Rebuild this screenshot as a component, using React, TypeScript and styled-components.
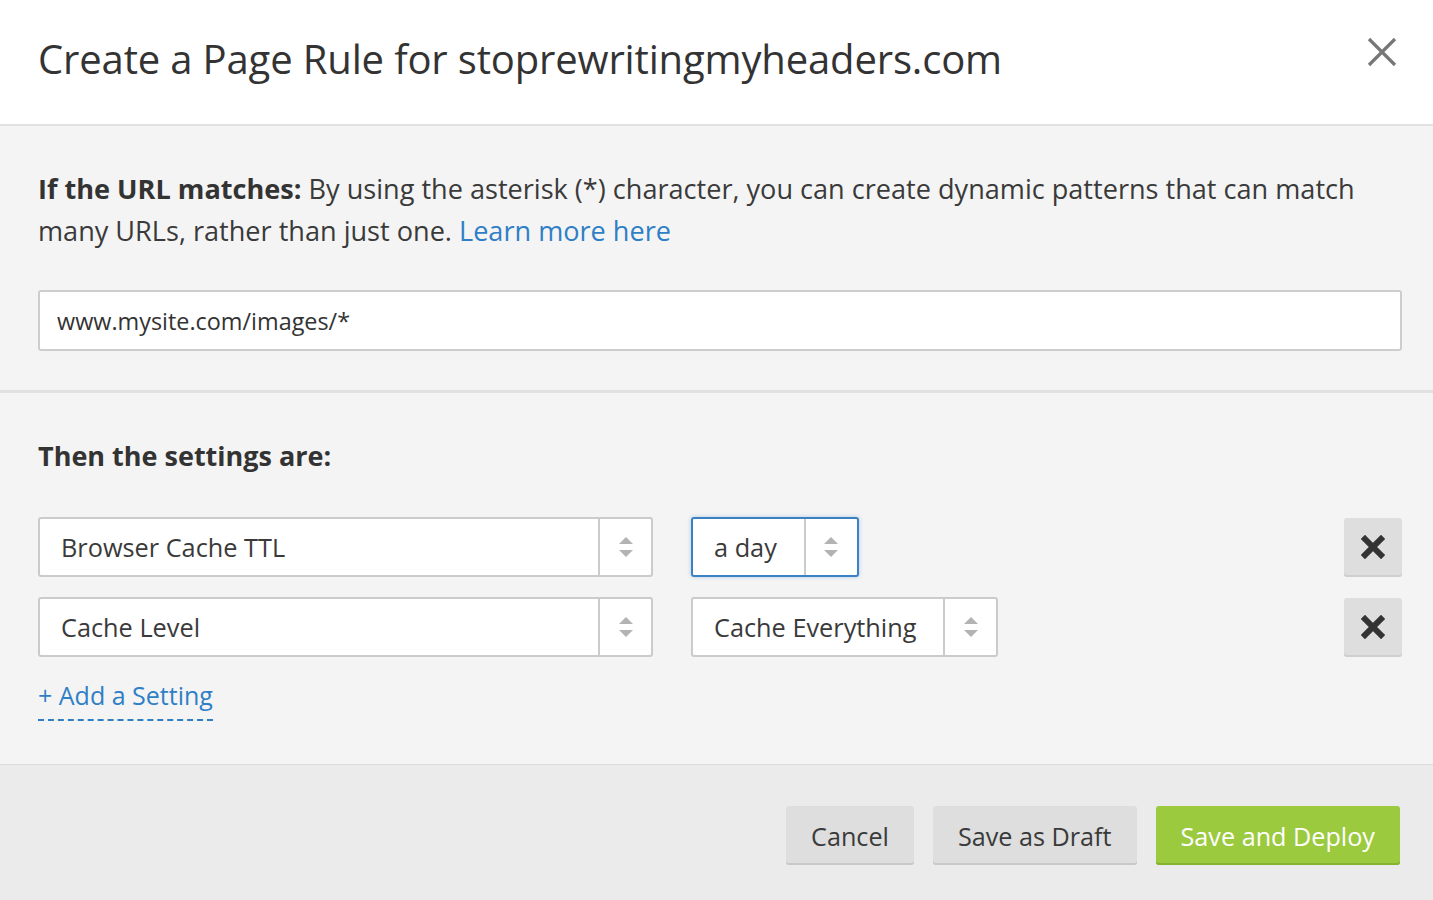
import styled, { createGlobalStyle } from "styled-components";

const GlobalStyle = createGlobalStyle`
  html, body { margin: 0; padding: 0; background: #fff; }
  body {
    font-family: "Open Sans", "Noto Sans", sans-serif;
    color: #333;
  }
  * { box-sizing: border-box; }
`;

const Modal = styled.div`
  width: 1433px;
  height: 900px;
  display: flex;
  flex-direction: column;
  background: #fff;
  overflow: hidden;
`;

const Header = styled.header`
  height: 126px;
  flex-shrink: 0;
  display: flex;
  align-items: center;
  justify-content: space-between;
  padding: 0 38px 8px 38px;
  border-bottom: 2px solid #e2e2e2;
`;

const Title = styled.h1`
  margin: 0;
  font-size: 40px;
  font-weight: 400;
  color: #333;
  letter-spacing: -0.15px;
`;

const CloseButton = styled.button`
  border: none;
  background: none;
  padding: 0;
  width: 30px;
  height: 30px;
  margin-right: -2px;
  margin-top: -12px;
  cursor: pointer;
  display: flex;
  align-items: center;
  justify-content: center;
`;

const Section = styled.section<{ $divider?: boolean; $top: number; $bottom: number }>`
  background: #f4f4f4;
  padding: ${(p) => p.$top}px 31px ${(p) => p.$bottom}px 38px;
  border-bottom: ${(p) => (p.$divider ? "3px solid #e1e1e1" : "none")};
`;

const Lead = styled.p`
  margin: 0;
  font-size: 27.1px;
  line-height: 42px;
  color: #3a3a3a;
`;

const Strong = styled.strong`
  font-weight: 700;
  color: #333;
`;

const Link = styled.a`
  color: #2f7fc6;
  text-decoration: none;
  cursor: pointer;
`;

const UrlInput = styled.input`
  display: block;
  width: 100%;
  height: 61px;
  margin-top: 38px;
  border: 2px solid #cdcdcd;
  border-radius: 3px;
  background: #fff;
  padding: 0 17px;
  font-family: inherit;
  font-size: 23.4px;
  color: #333;
  outline: none;
`;

const Heading = styled.h2`
  margin: 0 0 40px 0;
  font-size: 27px;
  line-height: 42px;
  font-weight: 700;
  color: #333;
`;

const Rows = styled.div`
  display: flex;
  flex-direction: column;
  gap: 20px;
`;

const Row = styled.div`
  display: flex;
  align-items: center;
  gap: 38px;
  height: 60px;
`;

const SelectBox = styled.div<{ $focused?: boolean; $width?: number }>`
  display: inline-flex;
  align-items: stretch;
  height: 60px;
  width: ${(p) => (p.$width ? `${p.$width}px` : "auto")};
  background: #fff;
  border: 2px solid ${(p) => (p.$focused ? "#3b82c4" : "#cbcbcb")};
  border-radius: 3px;
  box-shadow: ${(p) => (p.$focused ? "0 0 4px rgba(59,130,196,0.35)" : "none")};
`;

const SelectValue = styled.span`
  flex: 1;
  display: flex;
  align-items: center;
  padding: 0 27px 0 21px;
  font-size: 25.3px;
  color: #3a3a3a;
  white-space: nowrap;
`;

const Spinner = styled.span`
  width: 53px;
  flex-shrink: 0;
  border-left: 2px solid #cbcbcb;
  display: flex;
  align-items: center;
  justify-content: center;
`;

const Spacer = styled.div`
  flex: 1;
`;

const RemoveButton = styled.button`
  width: 58px;
  height: 59px;
  border: none;
  border-radius: 3px;
  background: #dedede;
  box-shadow: inset 0 -2px 0 #cfcfcf;
  display: flex;
  align-items: center;
  justify-content: center;
  padding: 0;
  cursor: pointer;
`;

const AddSetting = styled.a`
  display: inline-block;
  margin-top: 19px;
  font-size: 25px;
  line-height: 38px;
  padding-bottom: 5px;
  color: #2f7fc6;
  border-bottom: 2px dashed #2f7fc6;
  cursor: pointer;
`;

const Footer = styled.footer`
  flex: 1;
  background: #ebebeb;
  border-top: 1px solid #dcdcdc;
  display: flex;
  justify-content: flex-end;
  align-items: flex-start;
  gap: 19px;
  padding: 41px 33px 0 0;
`;

const Button = styled.button<{ $primary?: boolean }>`
  height: 59px;
  padding: 0 25px;
  border: none;
  border-radius: 3px;
  font-family: inherit;
  font-size: 25.2px;
  color: ${(p) => (p.$primary ? "#fff" : "#3a3a3a")};
  background: ${(p) => (p.$primary ? "#9bca3e" : "#dedede")};
  box-shadow: inset 0 -2px 0 ${(p) => (p.$primary ? "#86b22f" : "#c9c9c9")};
  cursor: pointer;
`;

const Arrows = () => (
  <svg width="16" height="24" viewBox="0 0 16 24">
    <path d="M8 2 L15 9 L1 9 Z" fill="#b3b3b3" />
    <path d="M1 15 L15 15 L8 22 Z" fill="#b3b3b3" />
  </svg>
);

const Select = ({ value, focused, width }: { value: string; focused?: boolean; width?: number }) => (
  <SelectBox $focused={focused} $width={width}>
    <SelectValue>{value}</SelectValue>
    <Spinner>
      <Arrows />
    </Spinner>
  </SelectBox>
);

const HeavyX = () => (
  <svg width="24" height="24" viewBox="0 0 24 24">
    <path d="M4 4 L20 20 M20 4 L4 20" stroke="#333" strokeWidth="6" strokeLinecap="square" />
  </svg>
);

const settings = [
  { name: "Browser Cache TTL", value: "a day", focused: true },
  { name: "Cache Level", value: "Cache Everything" },
];

export default function App() {
  return (
    <Modal>
      <GlobalStyle />
      <Header>
        <Title>Create a Page Rule for stoprewritingmyheaders.com</Title>
        <CloseButton aria-label="Close">
          <svg width="30" height="30" viewBox="0 0 30 30">
            <path d="M2 2 L28 28 M28 2 L2 28" stroke="#777" strokeWidth="3.2" />
          </svg>
        </CloseButton>
      </Header>

      <Section $divider $top={42} $bottom={39}>
        <Lead>
          <Strong>If the URL matches:</Strong> By using the asterisk (*) character, you can create dynamic
          patterns that can match many URLs, rather than just one. <Link>Learn more here</Link>
        </Lead>
        <UrlInput defaultValue="www.mysite.com/images/*" />
      </Section>

      <Section $top={42} $bottom={43}>
        <Heading>Then the settings are:</Heading>
        <Rows>
          {settings.map((s) => (
            <Row key={s.name}>
              <Select value={s.name} width={615} />
              <Select value={s.value} focused={s.focused} />
              <Spacer />
              <RemoveButton aria-label="Remove">
                <HeavyX />
              </RemoveButton>
            </Row>
          ))}
        </Rows>
        <AddSetting>+ Add a Setting</AddSetting>
      </Section>

      <Footer>
        <Button>Cancel</Button>
        <Button>Save as Draft</Button>
        <Button $primary>Save and Deploy</Button>
      </Footer>
    </Modal>
  );
}
